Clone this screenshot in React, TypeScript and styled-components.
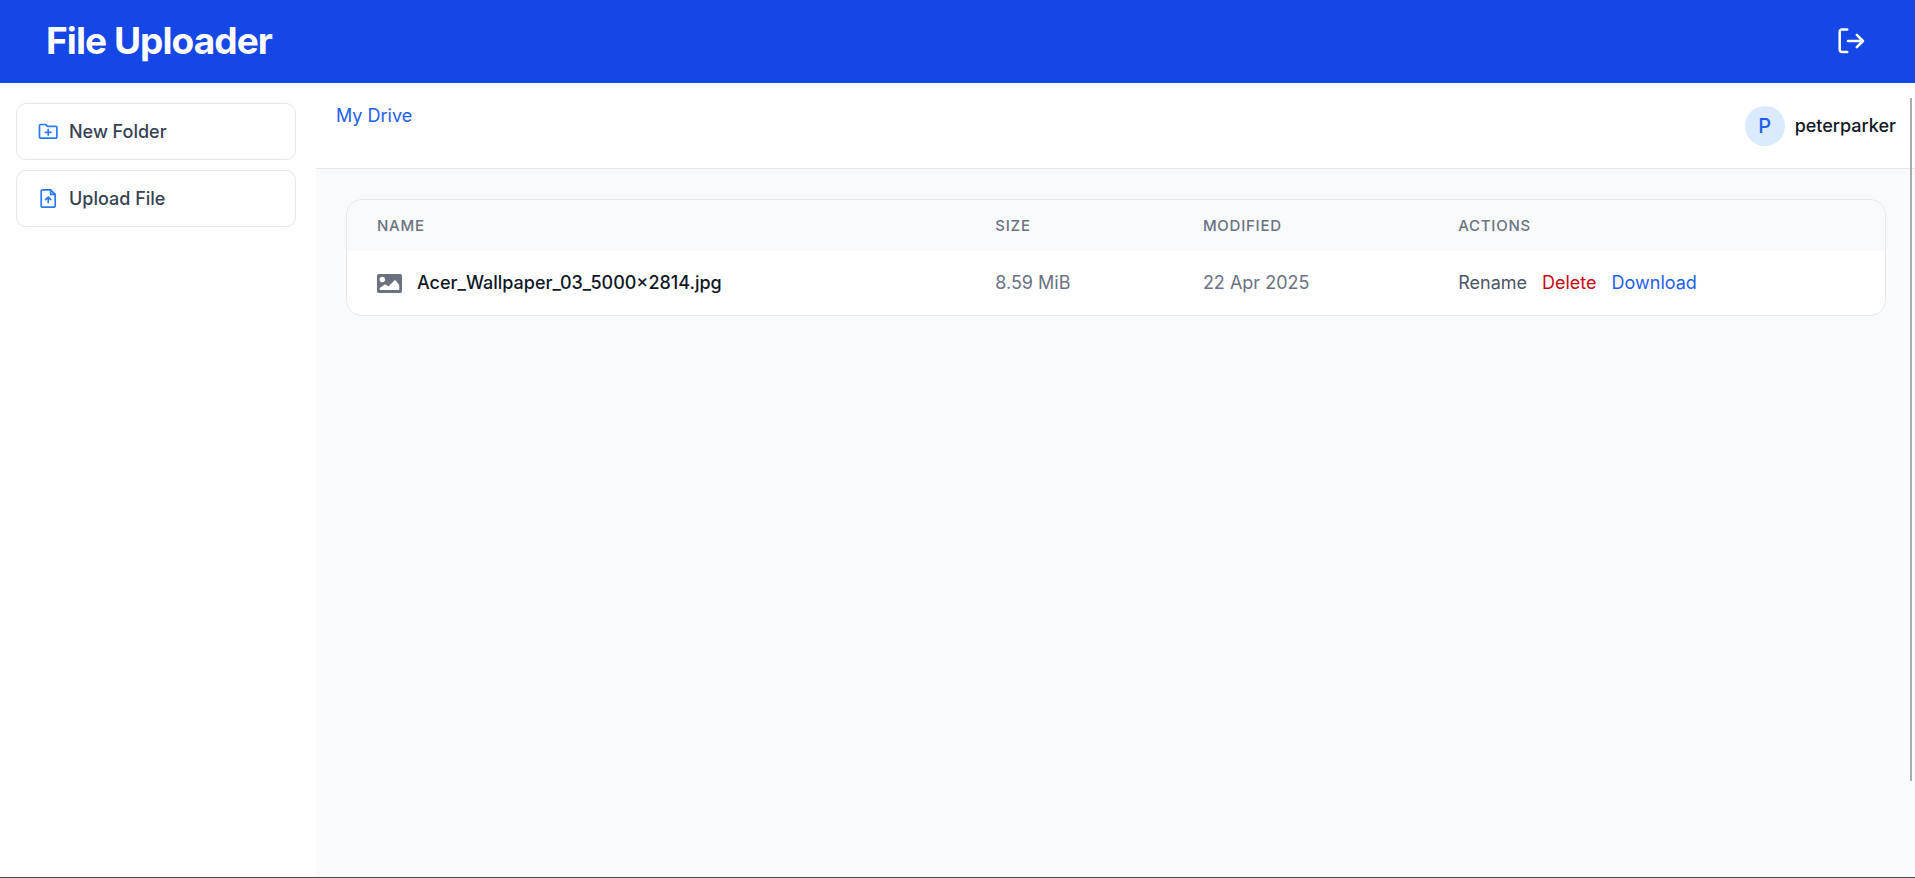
import React from "react";
import styled, { createGlobalStyle } from "styled-components";

const Global = createGlobalStyle`
  *, *::before, *::after { box-sizing: border-box; }
  body { margin: 0; font-family: Inter, "Liberation Sans", sans-serif; font-size: 18px; line-height: 28px; color: #111827; }
  h1, p { margin: 0; }
  button { font: inherit; cursor: pointer; }
`;

const Page = styled.div`
  min-height: 100vh;
  display: flex;
  flex-direction: column;
  border-bottom: 1px solid #4a4a4c;
  background: #fff;
`;

const Header = styled.header`
  display: flex;
  align-items: center;
  justify-content: space-between;
  height: 83px;
  padding: 0 46px;
  background: #1447e6;
  color: #fff;
`;

const Title = styled.h1`
  padding-bottom: 2px;
  font-size: 37px;
  line-height: 42px;
  font-weight: 700;
  letter-spacing: -0.025em;
`;

const IconButton = styled.button`
  display: flex;
  padding: 2px;
  border: 0;
  background: none;
  color: inherit;
`;

const Body = styled.div`
  flex: 1;
  display: flex;
`;

const Sidebar = styled.aside`
  flex: none;
  width: 316px;
  padding: 20px 20px 0 16px;
  display: flex;
  flex-direction: column;
  gap: 10px;
`;

const SideButton = styled.button`
  display: flex;
  align-items: center;
  gap: 10px;
  height: 57px;
  padding: 0 21px;
  border: 1px solid #e5e7eb;
  border-radius: 10px;
  background: #fff;
  color: #364153;
  font-weight: 500;
  svg { color: #2b7af5; }
`;

const Main = styled.main`
  flex: 1;
  min-width: 0;
  position: relative;
  background: #f9fafb;
`;

const TopBar = styled.div`
  display: flex;
  justify-content: space-between;
  align-items: flex-start;
  height: 86px;
  padding: 19px 19px 0 20px;
  background: #fff;
  border-bottom: 1px solid #e5e7eb;
`;

const Crumb = styled.a`
  color: #1d60ee;
  text-decoration: none;
`;

const User = styled.div`
  display: flex;
  align-items: center;
  gap: 10px;
  padding-top: 4px;
  font-weight: 500;
`;

const Avatar = styled.span`
  display: grid;
  place-items: center;
  width: 40px;
  height: 40px;
  border-radius: 50%;
  background: #dbeafe;
  color: #1d60ee;
  font-size: 20px;
`;

const Card = styled.div`
  margin: 30px 29px 30px 30px;
  border: 1px solid #e5e7eb;
  border-radius: 16px;
  overflow: hidden;
  background: #fff;
`;

const Table = styled.table`
  width: 100%;
  table-layout: fixed;
  border-collapse: collapse;
  text-align: left;
`;

const HeadCell = styled.th<{ $width: string }>`
  width: ${(p) => p.$width};
  height: 51px;
  padding: 0 30px;
  background: #f9fafb;
  color: #6a7282;
  font-size: 15px;
  line-height: 20px;
  font-weight: 500;
  letter-spacing: 0.05em;
`;

const Cell = styled.td`
  height: 64px;
  padding: 0 30px;
  color: #6a7282;
`;

const FileName = styled.div`
  display: flex;
  align-items: center;
  gap: 15px;
  color: #101828;
  font-weight: 500;
`;

const Actions = styled.div`
  display: flex;
  gap: 15px;
`;

const Action = styled.button<{ $color: string }>`
  padding: 0;
  border: 0;
  background: none;
  color: ${(p) => p.$color};
`;

const ScrollThumb = styled.div`
  position: absolute;
  top: 15px;
  right: 3px;
  width: 2px;
  height: 86%;
  background: #a9abad;
`;

const columns = [
  { label: "NAME", width: "40.2%" },
  { label: "SIZE", width: "13.5%" },
  { label: "MODIFIED", width: "16.6%" },
  { label: "ACTIONS", width: "29.7%" },
];

const LogoutIcon = () => (
  <svg width="29" height="29" viewBox="0 0 29 29" fill="none" stroke="currentColor" strokeWidth="2.5" strokeLinecap="round" strokeLinejoin="round" aria-hidden="true">
    <path d="M9.200 2.600H4.200A2.500 2.500 0 0 0 1.700 5.100V22.600A2.500 2.500 0 0 0 4.200 25.100H9.200" />
    <path d="M10 14H25M18.800 7.800L25 14L18.800 20.200" />
  </svg>
);

const FolderPlusIcon = () => (
  <svg width="21" height="21" viewBox="0 0 21 21" fill="none" stroke="currentColor" strokeWidth="1.7" strokeLinecap="round" strokeLinejoin="round" aria-hidden="true">
    <path d="M1.500 4.700A1.200 1.200 0 0 1 2.700 3.500H7.600L9.600 5.300H17.700A1.200 1.200 0 0 1 18.900 6.500V16A1.200 1.200 0 0 1 17.700 17.200H2.700A1.200 1.200 0 0 1 1.500 16Z" />
    <path d="M10.200 8.500V14.100M7.400 11.300H13" />
  </svg>
);

const FileUploadIcon = () => (
  <svg width="21" height="21" viewBox="0 0 21 21" fill="none" stroke="currentColor" strokeWidth="1.7" strokeLinecap="round" strokeLinejoin="round" aria-hidden="true">
    <path d="M4.600 1.800H12.600L17.200 6.400V17.800A1.400 1.400 0 0 1 15.800 19.200H4.600A1.400 1.400 0 0 1 3.200 17.800V3.200A1.400 1.400 0 0 1 4.600 1.800Z" />
    <path d="M12.600 2.200V6.400H16.800M10.200 14.600V9.400M7.600 11.600L10.200 9L12.800 11.600" />
  </svg>
);

const ImageIcon = () => (
  <svg width="25" height="19" viewBox="0 0 25 19" aria-hidden="true">
    <path fill="#6a7282" fillRule="evenodd" d="M1.800 0H23.200A1.800 1.800 0 0 1 25 1.800V17.200A1.800 1.800 0 0 1 23.200 19H1.800A1.800 1.800 0 0 1 0 17.200V1.800A1.800 1.800 0 0 1 1.800 0ZM5.300 2.800A2.700 2.700 0 1 0 5.300 8.200A2.700 2.700 0 1 0 5.300 2.800ZM3.500 16H21.500Q22.300 16 22.300 15.200V11.300L18.700 6.600Q18 5.800 17.200 6.600L11.500 12.500L8.700 10.600Q8 10.200 7.400 10.700L2.700 14V15.200Q2.700 16 3.500 16Z" />
  </svg>
);

export default function App() {
  return (
    <>
      <Global />
      <Page>
        <Header>
          <Title>File Uploader</Title>
          <IconButton aria-label="Log out"><LogoutIcon /></IconButton>
        </Header>
        <Body>
          <Sidebar>
            <SideButton><FolderPlusIcon />New Folder</SideButton>
            <SideButton><FileUploadIcon />Upload File</SideButton>
          </Sidebar>
          <Main>
            <TopBar>
              <Crumb href="#">My Drive</Crumb>
              <User><Avatar>P</Avatar>peterparker</User>
            </TopBar>
            <Card>
              <Table>
                <thead>
                  <tr>
                    {columns.map((c) => (
                      <HeadCell key={c.label} $width={c.width}>{c.label}</HeadCell>
                    ))}
                  </tr>
                </thead>
                <tbody>
                  <tr>
                    <Cell><FileName><ImageIcon />Acer_Wallpaper_03_5000×2814.jpg</FileName></Cell>
                    <Cell>8.59 MiB</Cell>
                    <Cell>22 Apr 2025</Cell>
                    <Cell>
                      <Actions>
                        <Action $color="#4a5565">Rename</Action>
                        <Action $color="#c90814">Delete</Action>
                        <Action $color="#1d60ee">Download</Action>
                      </Actions>
                    </Cell>
                  </tr>
                </tbody>
              </Table>
            </Card>
            <ScrollThumb />
          </Main>
        </Body>
      </Page>
    </>
  );
}
